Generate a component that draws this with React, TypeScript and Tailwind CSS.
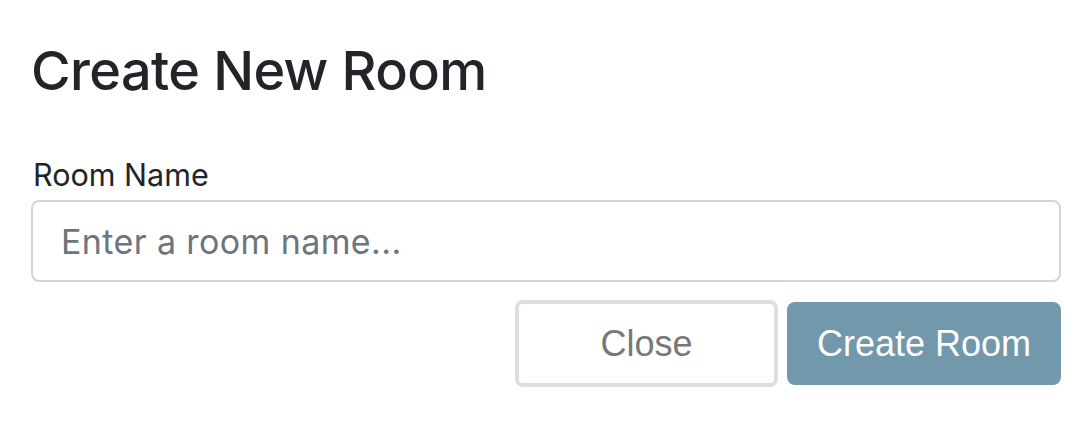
import { useState } from 'react'

export default function App() {
  const [roomName, setRoomName] = useState('')

  return (
    <div className="w-[1088px] h-[422px] bg-white pl-[31px] pr-[27px] pt-[39px] font-['Inter',sans-serif]">
      <h1 className="text-[54px] leading-[64px] font-medium text-[#212529] tracking-[-0.6px]">
        Create New Room
      </h1>

      <div className="mt-[53px]">
        <label className="block pl-[2px] text-[30.5px] leading-[38px] text-[#212529]">Room Name</label>
        <input
          type="text"
          value={roomName}
          onChange={(e) => setRoomName(e.target.value)}
          placeholder="Enter a room name..."
          className="mt-[6px] block w-full h-[82px] rounded-[8px] border-2 border-[#d3d5db] px-[28px] text-[34px] tracking-[0.4px] text-[#212529] placeholder:text-[#6c757d] outline-none"
        />
      </div>

      <div className="mt-[18px] flex justify-end gap-[9px]">
        <button className="w-[263px] h-[87px] rounded-[8px] border-4 border-[#dedede] bg-white text-[36px] text-[#777777] font-['Liberation_Sans',sans-serif]">
          Close
        </button>
        <button className="mt-[2px] w-[274px] h-[83px] rounded-[8px] bg-[#7298ab] text-[36px] text-white font-['Liberation_Sans',sans-serif]">
          Create Room
        </button>
      </div>
    </div>
  )
}
